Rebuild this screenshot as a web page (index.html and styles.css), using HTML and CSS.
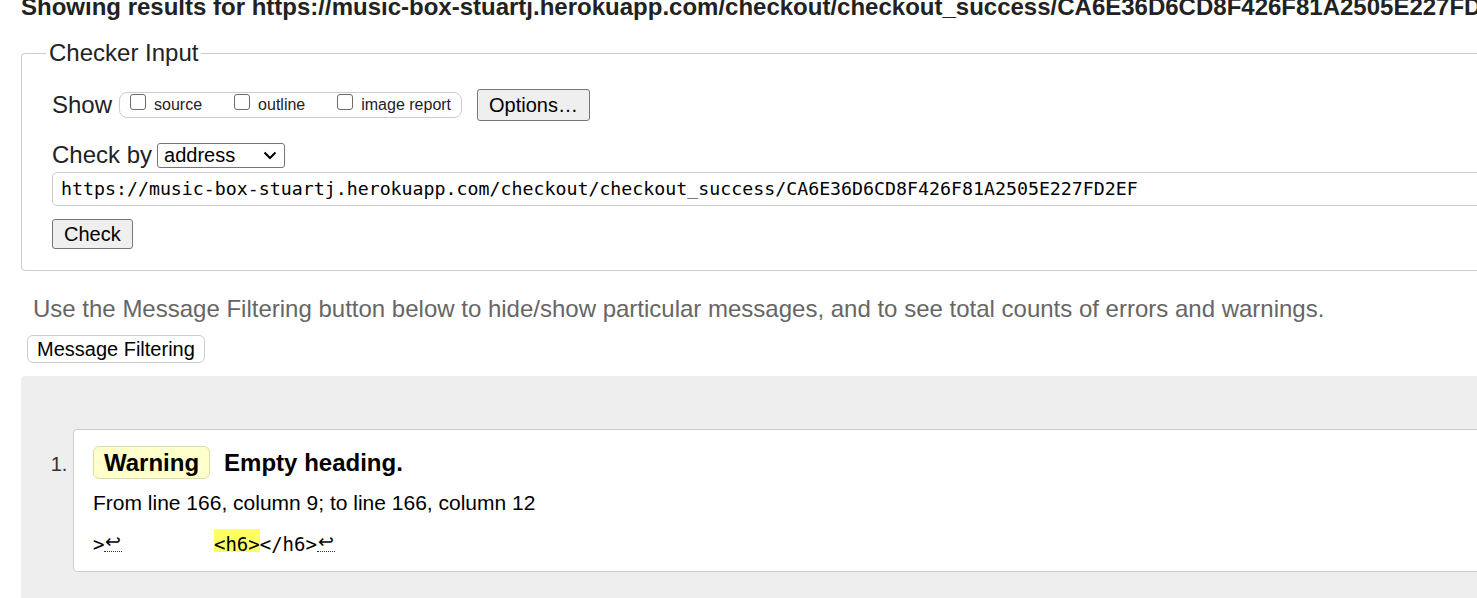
FILE: index.html
```html
<!DOCTYPE html>
<html lang="en">
<head>
<meta charset="utf-8">
<title>Nu Html Checker</title>
<link rel="stylesheet" href="styles.css">
</head>
<body>
<div class="page">
  <h2 class="title">Showing results for https://music-box-stuartj.herokuapp.com/checkout/checkout_success/CA6E36D6CD8F426F81A2505E227FD2EF</h2>
  <fieldset class="checker">
    <legend>Checker Input</legend>
    <div class="show-row">
      <span class="label">Show</span>
      <span class="opts">
        <span class="opt"><span class="cb"></span>source</span>
        <span class="opt"><span class="cb"></span>outline</span>
        <span class="opt"><span class="cb"></span>image report</span>
      </span>
      <span class="btn btn-options">Options…</span>
    </div>
    <div class="by-row">
      <span class="label">Check by</span>
      <span class="select">address<svg class="chev" width="14" height="9" viewBox="0 0 14 9"><polyline points="1.5,1.5 7,7 12.5,1.5" fill="none" stroke="#000" stroke-width="2"/></svg></span>
    </div>
    <div class="url">https://music-box-stuartj.herokuapp.com/checkout/checkout_success/CA6E36D6CD8F426F81A2505E227FD2EF</div>
    <div class="check-row"><span class="btn btn-check">Check</span></div>
  </fieldset>
  <p class="hint">Use the Message Filtering button below to hide/show particular messages, and to see total counts of errors and warnings.</p>
  <div class="filter-row"><span class="btn btn-filter">Message Filtering</span></div>
  <div class="results">
    <ol class="messages">
      <li class="msg">
        <p class="msg-head"><strong class="badge">Warning</strong><span class="msg-text">Empty heading.</span></p>
        <p class="loc">From line 166, column 9; to line 166, column 12</p>
        <p class="extract"><code>&gt;<abbr class="lf" title="line feed"><span class="lf-glyph">↩</span></abbr>        <b class="hl">&lt;h6&gt;</b>&lt;/h6&gt;<abbr class="lf" title="line feed"><span class="lf-glyph">↩</span></abbr></code></p>
      </li>
    </ol>
  </div>
</div>
</body>
</html>
```

FILE: styles.css
```css
html, body {
  margin: 0;
  padding: 0;
  overflow: hidden;
  background: #fff;
}
body {
  font-family: "Liberation Sans", Arial, sans-serif;
  color: #222;
}
.page {
  width: 1700px;
  padding-left: 21px;
}
.title {
  margin: -7px 0 0;
  font-size: 24px;
  line-height: 28px;
  font-weight: bold;
  white-space: nowrap;
  color: #222;
}
.checker {
  margin: 18px 0 0;
  padding: 0 30px 21px;
  border: 1px solid #ccc;
  border-radius: 4px;
  min-inline-size: 0;
}
.checker legend {
  font-size: 24px;
  line-height: 28px;
  padding: 0 3px;
  margin-left: -6px;
}
.show-row {
  display: flex;
  align-items: center;
  height: 32px;
  margin-top: 22px;
}
.label {
  font-size: 24px;
  line-height: 28px;
}
.opts {
  display: flex;
  align-items: center;
  gap: 32px;
  height: 24px;
  margin-left: 7px;
  padding: 0 10px;
  border: 1px solid #ccc;
  border-radius: 8px;
}
.opt {
  display: flex;
  align-items: center;
  gap: 8px;
  font-size: 16px;
  line-height: 18px;
}
.cb {
  width: 14px;
  height: 14px;
  margin-bottom: 6px;
  border: 1px solid #6b6b6b;
  border-radius: 3px;
  background: #fff;
}
.btn {
  display: inline-flex;
  align-items: center;
  box-sizing: border-box;
  font-size: 20px;
  color: #000;
  background: #efefef;
  border: 1px solid #767676;
  border-radius: 3px;
}
.btn-options {
  height: 32px;
  padding: 0 11px;
  margin-left: 15px;
}
.by-row {
  display: flex;
  align-items: center;
  height: 28px;
  margin-top: 20px;
}
.select {
  display: flex;
  align-items: center;
  justify-content: space-between;
  box-sizing: border-box;
  width: 128px;
  height: 25px;
  margin-left: 5px;
  padding: 0 7px 0 6px;
  font-size: 20px;
  color: #000;
  border: 1px solid #767676;
  border-radius: 3px;
  background: #fff;
}
.url {
  box-sizing: border-box;
  height: 34px;
  margin-top: 3px;
  padding: 0 8px;
  font-family: "DejaVu Sans Mono", "Liberation Mono", monospace;
  font-size: 18.25px;
  line-height: 32px;
  color: #000;
  border: 1px solid #ccc;
  border-radius: 5px;
  white-space: nowrap;
}
.check-row {
  margin-top: 13px;
  display: flex;
}
.btn-check {
  height: 30px;
  padding: 0 11px;
}
.hint {
  margin: 24px 0 0 12px;
  font-size: 24px;
  line-height: 28px;
  color: #666;
}
.filter-row {
  display: flex;
  margin: 12px 0 0 6px;
}
.btn-filter {
  height: 28px;
  padding: 0 9px;
  background: #fff;
  border: 1px solid #ccc;
  border-radius: 6px;
}
.results {
  margin-top: 13px;
  padding: 53px 0 60px 52px;
  background: #eee;
  border-radius: 4px 0 0 0;
}
.messages {
  margin: 0;
  padding: 0;
}
.msg {
  padding: 16px 19px 15px;
  font-size: 20px;
  color: #222;
  background: #fff;
  border: 1px solid #ccc;
  border-radius: 4px;
}
.msg::marker {
  color: #333;
}
.msg-head {
  margin: 0;
  color: #000;
}
.badge {
  display: inline-block;
  padding: 2px 10px;
  font-size: 24px;
  line-height: 27px;
  background: #ffc;
  border: 1px solid #dddcaa;
  border-radius: 6px;
}
.msg-text {
  margin-left: 14px;
  font-size: 24px;
  font-weight: bold;
}
.loc {
  margin: 12px 0 0;
  font-size: 21px;
  line-height: 24px;
  color: #000;
}
.extract {
  margin: 14px 0 0;
  line-height: 24px;
}
.extract code {
  font-family: "DejaVu Sans Mono", "Liberation Mono", monospace;
  font-size: 19px;
  white-space: pre;
  color: #000;
}
.lf {
  display: inline-block;
  box-sizing: border-box;
  width: 18px;
  height: 15px;
  line-height: 14px;
  text-align: center;
  text-decoration: none;
  font-family: "DejaVu Sans", sans-serif;
  font-size: 19px;
  font-weight: 300;
  border-bottom: 1px dotted #333;
}
.lf-glyph {
  position: relative;
  top: -3px;
}
.hl {
  display: inline-block;
  height: 23px;
  line-height: 31px;
  font-weight: normal;
  background: #ff6;
}
```
